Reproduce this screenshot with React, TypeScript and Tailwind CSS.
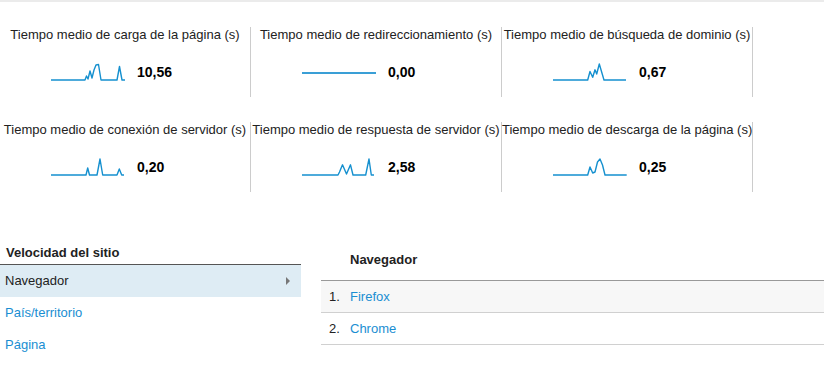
type Metric = {
    title: string;
    value: string;
    points: number[][];
    flat?: boolean;
}

const metrics: Metric[] = [
    {
        title: "Tiempo medio de carga de la página (s)",
        value: "10,56",
        points: [[0, 18], [34, 18], [35.5, 14], [37, 17], [39, 9], [41, 16], [43, 8], [45, 3], [47.5, 2.5], [50, 18], [66, 18], [68.5, 4.5], [71, 18], [74, 18]],
    },
    {
        title: "Tiempo medio de redireccionamiento (s)",
        value: "0,00",
        points: [[0, 11], [74, 11]],
        flat: true,
    },
    {
        title: "Tiempo medio de búsqueda de dominio (s)",
        value: "0,67",
        points: [[0, 18], [34.7, 18], [37, 9.5], [39.7, 15.3], [42, 7.8], [43.7, 12], [46.3, 2], [51, 18], [73, 18]],
    },
    {
        title: "Tiempo medio de conexión de servidor (s)",
        value: "0,20",
        points: [[0, 18], [35, 18], [36.7, 11], [38.5, 18], [46, 18], [49, 2], [51.7, 18], [66, 18], [68.3, 12], [70.7, 18], [73, 18]],
    },
    {
        title: "Tiempo medio de respuesta de servidor (s)",
        value: "2,58",
        points: [[0, 18], [36, 18], [37.5, 15], [40.5, 7.8], [44.5, 17], [48.5, 7.8], [51, 18], [63.7, 18], [67, 2], [69.3, 18], [72, 18]],
    },
    {
        title: "Tiempo medio de descarga de la página (s)",
        value: "0,25",
        points: [[0, 18], [34.7, 18], [37, 10], [39.7, 16], [42, 15], [44.5, 5], [47, 2], [49.5, 8], [52, 18], [73.7, 18]],
    },
];

function Sparkline({ points, flat }: { points: number[][]; flat?: boolean }) {
    return (
        <svg width="75" height="20" viewBox="0 0 75 20" className="shrink-0">
            <polyline
                points={points.map((p) => p.join(",")).join(" ")}
                fill="none"
                stroke={flat ? "#3a9fd6" : "#1590cf"}
                strokeWidth={flat ? 2 : 1.4}
                strokeLinejoin="round"
            />
        </svg>
    );
}

function MetricCell({ metric }: { metric: Metric }) {
    return (
        <div className="h-[70px] border-r border-[#cccccc] text-center">
            <div className="whitespace-nowrap text-[13px] leading-4 text-[#222]">{metric.title}</div>
            <div className="mt-[19px] flex items-center pl-[51px]">
                <Sparkline points={metric.points} flat={metric.flat} />
                <span className="ml-[11px] text-[14px] font-bold leading-5 text-black">{metric.value}</span>
            </div>
        </div>
    );
}

export default function App() {
    return (
        <main className="h-[369px] w-[824px] overflow-hidden bg-white font-['Liberation_Sans',Arial,sans-serif]">
            <div className="h-[2px] bg-[#ebebeb]" />

            <div className="grid grid-cols-[251px_251px_251px] gap-y-[25px] pt-[25px]">
                {metrics.map((m) => (
                    <MetricCell key={m.title} metric={m} />
                ))}
            </div>

            <div className="mt-[48px] flex">
                <div className="w-[301px]">
                    <div className="border-b border-[#555] pl-[6px] pt-[5px] pb-[3px] text-[13px] font-bold leading-4 text-[#222]">
                        Velocidad del sitio
                    </div>
                    <div className="flex h-8 items-center justify-between bg-[#deecf4] pl-[5px] pr-[11px] text-[13px] text-[#222]">
                        <span>Navegador</span>
                        <span className="h-0 w-0 border-y-[4px] border-l-[4px] border-y-transparent border-l-[#777]" />
                    </div>
                    <div className="flex h-8 items-center pl-[5px] text-[13px] text-[#1a8ed2]">País/territorio</div>
                    <div className="flex h-8 items-center pl-[5px] text-[13px] text-[#1a8ed2]">Página</div>
                </div>

                <div className="ml-[20px] flex-1">
                    <div className="flex h-[41px] items-center border-b border-[#999] pl-[29px] text-[13px] font-bold text-[#222]">
                        Navegador
                    </div>
                    <div className="flex h-8 items-center border-b border-[#d0d0d0] bg-[#f7f7f7] pl-[8px] text-[13px]">
                        <span className="w-[21px] text-[#222]">1.</span>
                        <span className="text-[#1a8ed2]">Firefox</span>
                    </div>
                    <div className="flex h-8 items-center border-b border-[#d0d0d0] pl-[8px] text-[13px]">
                        <span className="w-[21px] text-[#222]">2.</span>
                        <span className="text-[#1a8ed2]">Chrome</span>
                    </div>
                </div>
            </div>
        </main>
    );
}
